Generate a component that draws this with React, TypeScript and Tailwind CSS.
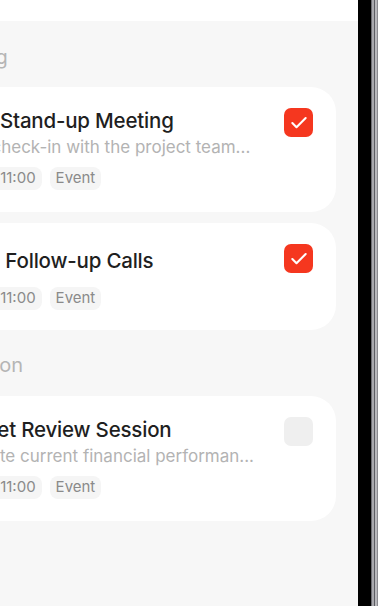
import { Check } from 'lucide-react'

type Task = {
  title: string
  desc?: string
  time: string
  tag: string
  done: boolean
}

const SECTIONS: { label: string; tasks: Task[] }[] = [
  {
    label: 'Morning',
    tasks: [
      { title: 'Daily Stand-up Meeting', desc: 'Daily check-in with the project team...', time: '10:00 - 11:00', tag: 'Event', done: true },
      { title: 'Team Follow-up Calls', time: '10:00 - 11:00', tag: 'Event', done: true },
    ],
  },
  {
    label: 'Afternoon',
    tasks: [
      { title: 'Budget Review Session', desc: 'Evaluate current financial performan...', time: '10:00 - 11:00', tag: 'Event', done: false },
    ],
  },
]

function TaskCard({ task }: { task: Task }) {
  return (
    <div
      className={`bg-white rounded-[25px] pl-5 pr-[23px] flex items-start gap-4 ${
        task.desc ? 'pt-5 pb-[22px]' : 'pt-6 pb-5'
      }`}
    >
      <div className="flex-1 min-w-0">
        <div className="text-[20.5px] leading-[28px] font-medium text-[#1f1f1f] tracking-[-0.2px] whitespace-nowrap overflow-hidden">
          {task.title}
        </div>
        {task.desc && (
          <div className="text-[17px] leading-[24px] text-[#b3b3b3] whitespace-nowrap overflow-hidden">{task.desc}</div>
        )}
        <div className={`flex gap-[8px] -ml-[7px] ${task.desc ? 'mt-2' : 'mt-3'}`}>
          <span className="bg-[#f5f5f5] rounded-[8px] px-[6px] h-[23px] flex items-center text-[15px] text-[#8a8a8a] whitespace-pre">
            {task.time}
          </span>
          <span className="bg-[#f5f5f5] rounded-[8px] px-[6px] h-[23px] flex items-center text-[15px] text-[#8a8a8a]">
            {task.tag}
          </span>
        </div>
      </div>
      <div
        className={`w-[29px] h-[29px] rounded-[7px] flex items-center justify-center shrink-0 ${
          task.desc ? 'mt-[1px]' : '-mt-[3px]'
        } ${task.done ? 'bg-[#f5371f]' : 'bg-[#efefef]'}`}
      >
        {task.done && <Check size={20} strokeWidth={2.5} className="text-white" />}
      </div>
    </div>
  )
}

export default function App() {
  return (
    <div className="w-[378px] h-[606px] flex overflow-hidden bg-black" style={{ fontFamily: 'Inter, "Noto Sans", sans-serif' }}>
      <div className="w-[358px] h-full bg-[#f7f7f7] overflow-hidden flex flex-col shrink-0">
        <div className="h-[21px] bg-white shrink-0" />
        <div className="-ml-[73px] mr-[22px] flex flex-col">
          {SECTIONS.map((s, i) => (
            <div key={s.label} className={i === 0 ? 'pt-[22px]' : 'pt-[21px]'}>
              <div className={`pl-[2px] text-[20px] leading-[28px] text-[#b5b5b5] ${i === 0 ? 'mb-[16px]' : 'mb-[17px]'}`}>
                {s.label}
              </div>
              <div className="flex flex-col gap-[11px]">
                {s.tasks.map((t) => (
                  <TaskCard key={t.title} task={t} />
                ))}
              </div>
            </div>
          ))}
        </div>
      </div>
      <div className="w-[13px] h-full bg-black shrink-0" />
      <div className="flex h-full shrink-0">
        <div className="w-px bg-[#6e6e74]" />
        <div className="w-[2px] bg-[#a9a9ae]" />
        <div className="w-px bg-[#5c5c62]" />
        <div className="w-[2px] bg-[#b8b8bc]" />
        <div className="w-px bg-[#8a8a90]" />
      </div>
    </div>
  )
}
